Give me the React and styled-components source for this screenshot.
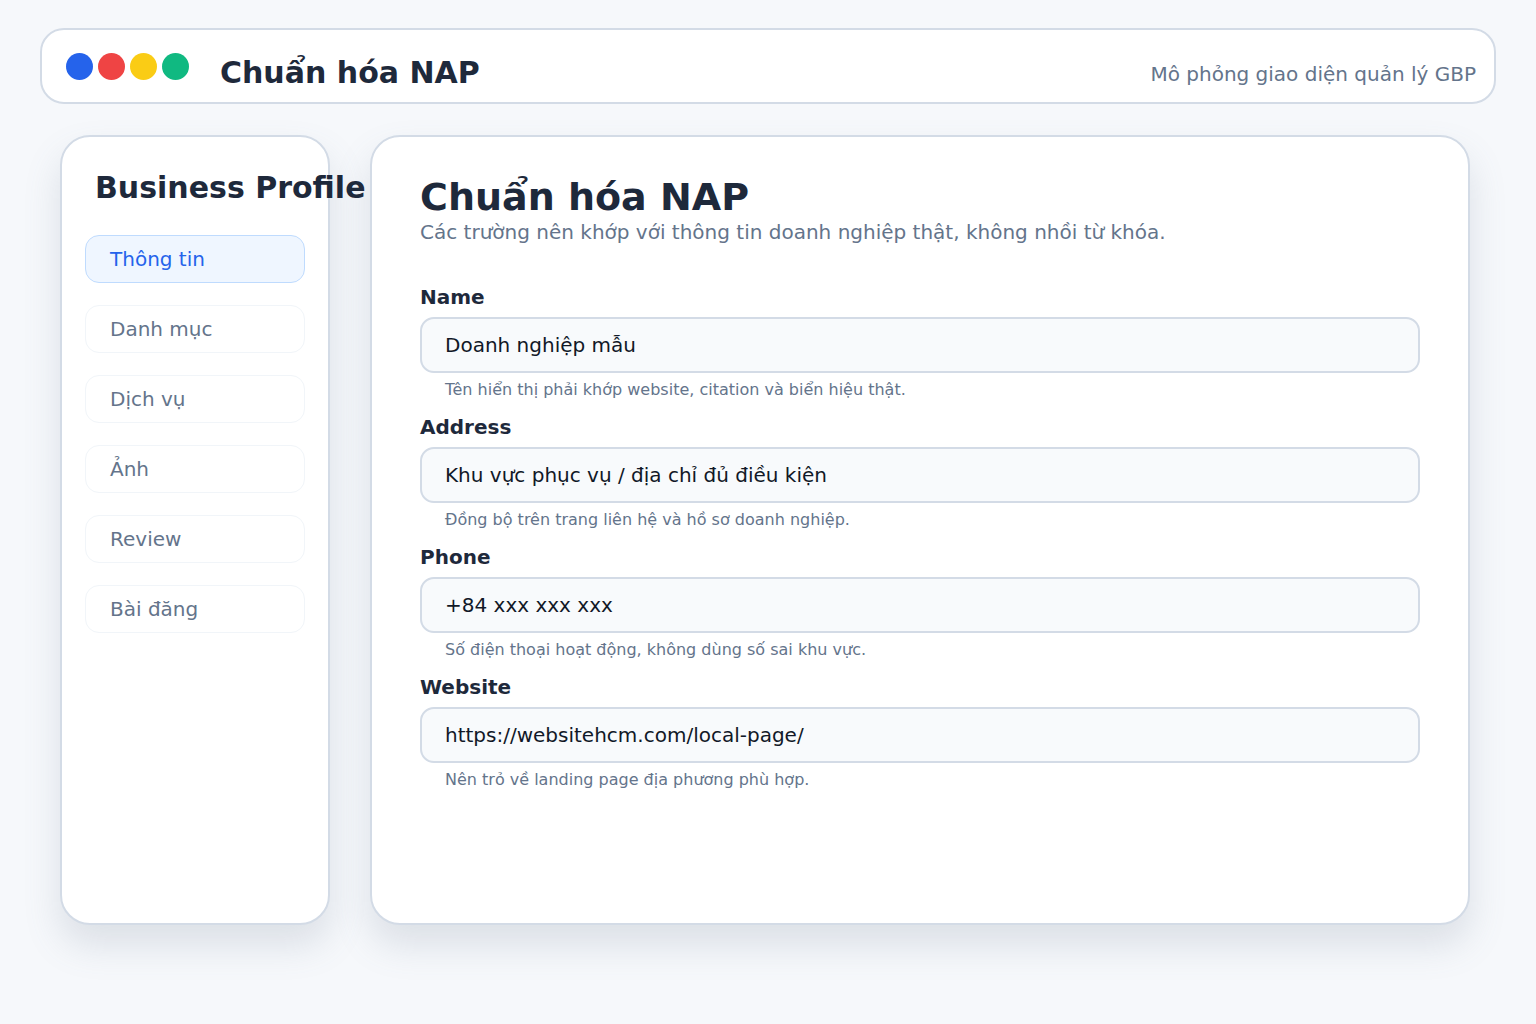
import styled, { createGlobalStyle } from "styled-components";

const Global = createGlobalStyle`
  * { box-sizing: border-box; }
  body {
    margin: 0;
    background: #f6f8fb;
    font-family: "DejaVu Sans", "Noto Sans", sans-serif;
    color: #1e293b;
  }
`;

const Page = styled.div`
  padding: 28px 40px;
  min-height: 1024px;
`;

const Header = styled.header`
  height: 76px;
  border: 2px solid #d3dbe6;
  border-radius: 24px;
  background: #fff;
  display: flex;
  align-items: center;
  padding: 0 18px 0 24px;
`;

const Dots = styled.div`
  display: flex;
  gap: 5px;
  margin-right: 31px;
`;

const Dot = styled.span`
  width: 27px;
  height: 27px;
  border-radius: 50%;
  background: ${(p) => p.$color};
`;

const AppTitle = styled.h1`
  margin: 12px 0 0;
  font-size: 30px;
  font-weight: 700;
  color: #1e293b;
  flex: 1;
`;

const Tagline = styled.span`
  font-size: 20px;
  color: #64748b;
  margin-top: 16px;
`;

const Body = styled.div`
  display: flex;
  gap: 40px;
  margin: 31px 26px 0 20px;
  height: 790px;
`;

const Card = styled.div`
  background: #fff;
  border: 2px solid #d3dbe6;
  border-radius: 30px;
  box-shadow: 0 20px 36px rgba(100, 116, 139, 0.18);
`;

const Sidebar = styled(Card)`
  width: 270px;
  flex-shrink: 0;
  padding: 33px 23px;
  display: flex;
  flex-direction: column;
`;

const SideTitle = styled.h2`
  margin: 0 0 29px 10px;
  font-size: 30px;
  line-height: 36px;
  font-weight: 700;
  white-space: nowrap;
  color: #1e293b;
`;

const Nav = styled.nav`
  display: flex;
  flex-direction: column;
  gap: 22px;
`;

const NavItem = styled.div`
  height: 48px;
  border-radius: 14px;
  display: flex;
  align-items: center;
  padding-left: 24px;
  font-size: 20px;
  border: 1px solid ${(p) => (p.$active ? "#bfdbfe" : "#f1f5f9")};
  background: ${(p) => (p.$active ? "#eff6ff" : "#fff")};
  color: ${(p) => (p.$active ? "#2563eb" : "#64748b")};
`;

const Main = styled(Card)`
  flex: 1;
  padding: 37px 48px;
`;

const MainTitle = styled.h2`
  margin: 0;
  font-size: 38px;
  line-height: 46px;
  font-weight: 700;
  color: #1e293b;
`;

const Subtitle = styled.p`
  margin: 0 0 41px;
  font-size: 20px;
  line-height: 24px;
  color: #64748b;
`;

const Field = styled.div`
  display: flex;
  flex-direction: column;
  margin-bottom: 15px;
`;

const Label = styled.label`
  font-size: 20px;
  line-height: 24px;
  font-weight: 700;
  color: #1e293b;
  margin-bottom: 8px;
`;

const Input = styled.div`
  height: 56px;
  border: 2px solid #d3dbe6;
  border-radius: 14px;
  background: #f8fafc;
  display: flex;
  align-items: center;
  padding-left: 23px;
  font-size: 20px;
  color: #111827;
`;

const Hint = styled.span`
  margin-top: 7px;
  padding-left: 25px;
  font-size: 16px;
  line-height: 20px;
  color: #64748b;
`;

const navItems = ["Thông tin", "Danh mục", "Dịch vụ", "Ảnh", "Review", "Bài đăng"];

const fields = [
  { label: "Name", value: "Doanh nghiệp mẫu", hint: "Tên hiển thị phải khớp website, citation và biển hiệu thật." },
  { label: "Address", value: "Khu vực phục vụ / địa chỉ đủ điều kiện", hint: "Đồng bộ trên trang liên hệ và hồ sơ doanh nghiệp." },
  { label: "Phone", value: "+84 xxx xxx xxx", hint: "Số điện thoại hoạt động, không dùng số sai khu vực." },
  { label: "Website", value: "https://websitehcm.com/local-page/", hint: "Nên trỏ về landing page địa phương phù hợp." },
];

export default function App() {
  return (
    <>
      <Global />
      <Page>
        <Header>
          <Dots>
            <Dot $color="#2563eb" />
            <Dot $color="#ef4444" />
            <Dot $color="#facc15" />
            <Dot $color="#10b981" />
          </Dots>
          <AppTitle>Chuẩn hóa NAP</AppTitle>
          <Tagline>Mô phỏng giao diện quản lý GBP</Tagline>
        </Header>
        <Body>
          <Sidebar>
            <SideTitle>Business Profile</SideTitle>
            <Nav>
              {navItems.map((n, i) => (
                <NavItem key={n} $active={i === 0}>{n}</NavItem>
              ))}
            </Nav>
          </Sidebar>
          <Main>
            <MainTitle>Chuẩn hóa NAP</MainTitle>
            <Subtitle>Các trường nên khớp với thông tin doanh nghiệp thật, không nhồi từ khóa.</Subtitle>
            {fields.map((f) => (
              <Field key={f.label}>
                <Label>{f.label}</Label>
                <Input>{f.value}</Input>
                <Hint>{f.hint}</Hint>
              </Field>
            ))}
          </Main>
        </Body>
      </Page>
    </>
  );
}
